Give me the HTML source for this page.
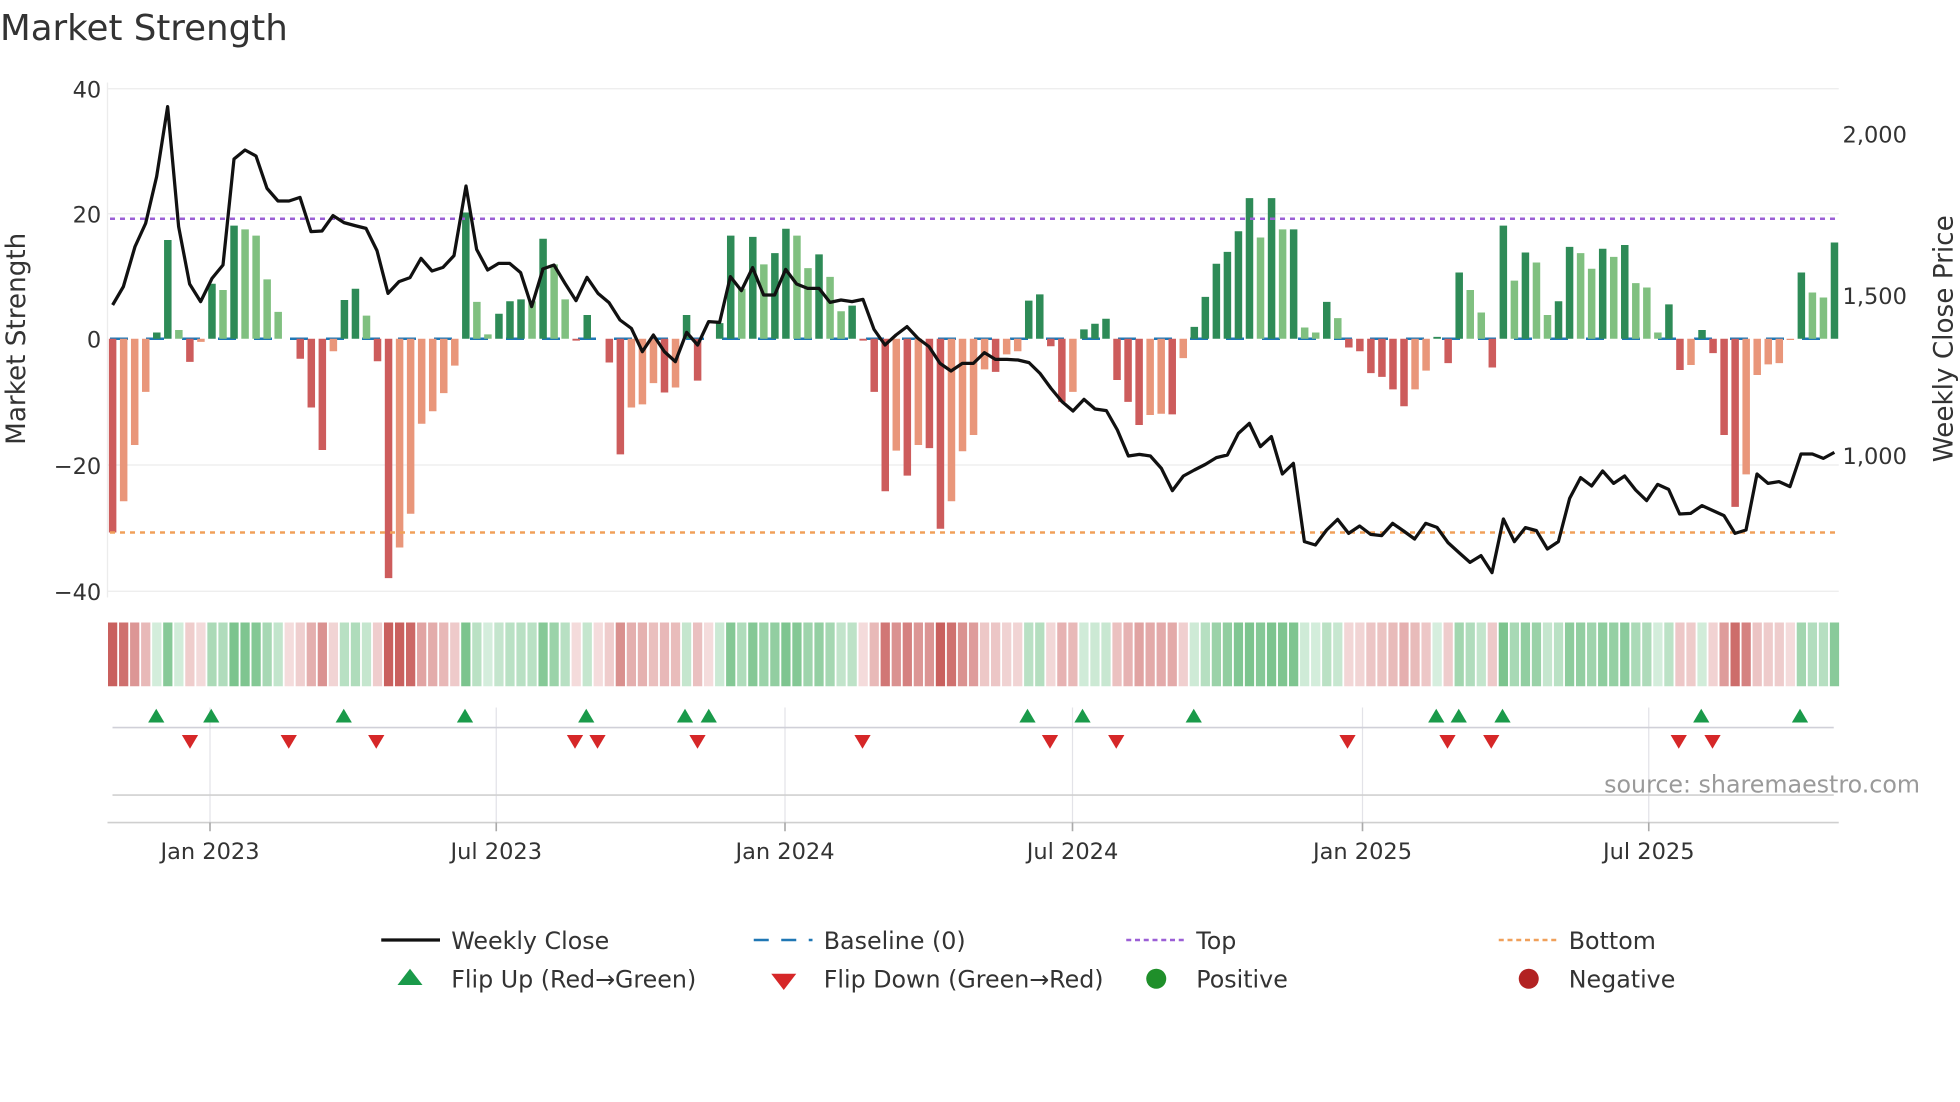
<!DOCTYPE html>
<html><head><meta charset="utf-8">
<style>
html,body{margin:0;padding:0;background:#fff;}
svg{display:block;}
text{font-family:"DejaVu Sans","Liberation Sans",sans-serif;fill:#333;}
</style></head>
<body>
<svg id="c" width="1960" height="1102" viewBox="0 0 1568 881.6" xmlns="http://www.w3.org/2000/svg">
<text x="0" y="32" font-size="28.5" fill="#333">Market Strength</text>
<g stroke="#ececec" stroke-width="1">
<line x1="86" y1="71" x2="1471" y2="71"/>
<line x1="86" y1="171" x2="1471" y2="171"/>
<line x1="86" y1="372" x2="1471" y2="372"/>
<line x1="86" y1="473" x2="1471" y2="473"/>
<line x1="86" y1="66" x2="86" y2="478"/>
</g>
<g font-size="18" text-anchor="end">
<text x="81" y="78">40</text>
<text x="81" y="178">20</text>
<text x="81" y="278">0</text>
<text x="81" y="379">−20</text>
<text x="81" y="480">−40</text>
</g>
<g font-size="18">
<text x="1474" y="114">2,000</text>
<text x="1474" y="243">1,500</text>
<text x="1474" y="371">1,000</text>
</g>
<text font-size="21" transform="translate(20,271) rotate(-90)" text-anchor="middle">Market Strength</text>
<text font-size="21" transform="translate(1562,271) rotate(-90)" text-anchor="middle">Weekly Close Price</text>
<line x1="88" y1="271" x2="1468" y2="271" stroke="#1f77b4" stroke-width="2" stroke-dasharray="14.4 14.4"/>
<g id="bars"></g>
<line x1="88" y1="175" x2="1470" y2="175" stroke="#9b5fd6" stroke-width="2" stroke-dasharray="4 4"/>
<line x1="88" y1="426" x2="1470" y2="426" stroke="#f0a05a" stroke-width="2" stroke-dasharray="4 4"/>
<polyline id="price" fill="none" stroke="#111" stroke-width="2.6" stroke-linejoin="round"/>
<g id="strip"></g>
<g stroke="#e3e3e8" stroke-width="1">
<line x1="168" y1="566" x2="168" y2="660"/><line x1="397" y1="566" x2="397" y2="660"/>
<line x1="628" y1="566" x2="628" y2="660"/><line x1="858" y1="566" x2="858" y2="660"/>
<line x1="1090" y1="566" x2="1090" y2="660"/><line x1="1319" y1="566" x2="1319" y2="660"/>
</g>
<line x1="90" y1="582" x2="1467" y2="582" stroke="#d0d0d8" stroke-width="1.3"/>
<line x1="90" y1="636" x2="1467" y2="636" stroke="#d0d0d0" stroke-width="1.3"/>
<line x1="86" y1="658" x2="1471" y2="658" stroke="#cfcfcf" stroke-width="1.3"/>
<g stroke="#aaa" stroke-width="1.3">
<line x1="168" y1="658" x2="168" y2="665"/><line x1="397" y1="658" x2="397" y2="665"/>
<line x1="628" y1="658" x2="628" y2="665"/><line x1="858" y1="658" x2="858" y2="665"/>
<line x1="1090" y1="658" x2="1090" y2="665"/><line x1="1319" y1="658" x2="1319" y2="665"/>
</g>
<g id="marks"></g>
<text x="1536" y="634" font-size="19" text-anchor="end" style="fill:#9a9a9a">source: sharemaestro.com</text>
<g font-size="18" text-anchor="middle">
<text x="168" y="687">Jan 2023</text><text x="397" y="687">Jul 2023</text>
<text x="628" y="687">Jan 2024</text><text x="858" y="687">Jul 2024</text>
<text x="1090" y="687">Jan 2025</text><text x="1319" y="687">Jul 2025</text>
</g>
<g font-size="19">
<line x1="305" y1="752" x2="352" y2="752" stroke="#111" stroke-width="2.6"/>
<text x="361" y="759">Weekly Close</text>
<line x1="603" y1="752" x2="650" y2="752" stroke="#1f77b4" stroke-width="2" stroke-dasharray="12 10"/>
<text x="659" y="759">Baseline (0)</text>
<line x1="901" y1="752" x2="948" y2="752" stroke="#9b5fd6" stroke-width="2" stroke-dasharray="4 3"/>
<text x="957" y="759">Top</text>
<line x1="1199" y1="752" x2="1246" y2="752" stroke="#f0a05a" stroke-width="2" stroke-dasharray="4 3"/>
<text x="1255" y="759">Bottom</text>
<polygon points="318,788 338,788 328,775" fill="#1a9a4a"/>
<text x="361" y="790">Flip Up (Red→Green)</text>
<polygon points="617,779 637,779 627,792" fill="#d62728"/>
<text x="659" y="790">Flip Down (Green→Red)</text>
<circle cx="925" cy="783" r="8" fill="#1f8f2a"/>
<text x="957" y="790">Positive</text>
<circle cx="1223" cy="783" r="8" fill="#b22222"/>
<text x="1255" y="790">Negative</text>
</g>
</svg>
<script>
(function(){
var NS="http://www.w3.org/2000/svg";
var d="-31D -26L -17L -8.5L 1D 15.8D 1.4L -3.7D -0.5L 8.8D 7.8L 18.1D 17.5L 16.5L 9.5L 4.3L 0L -3.2D -11D -17.8D -2L 6.2D 8D 3.7L -3.6D -38.3D -33.4L -28L -13.6L -11.6L -8.7L -4.3L 20.2D 5.9L 0.7L 4D 6D 6.3D 6L 16D 11.9L 6.3L -0.3D 3.8D 0L -3.8D -18.5D -11L -10.5L -7.1L -8.6D -7.8L 3.8D -6.7D 0L 2.5D 16.5D 8L 16.3D 11.9L 13.7D 17.6D 16.5L 11.3L 13.5D 9.9L 4.4L 5.3D -0.3D -8.5D -24.4D -17.9L -21.9D -17L -17.5D -30.4D -26L -18L -15.4L -4.9L -5.3D -2.5L -2L 6.1D 7.1D -1.2D -10.1D -8.5L 1.5D 2.4D 3.2D -6.6D -10.1D -13.8D -12.2L -12L -12.1D -3.1L 1.9D 6.7D 12D 13.9D 17.2D 22.5D 16.2L 22.5D 17.5L 17.5D 1.8L 1L 5.9D 3.3L -1.4D -2D -5.5D -6.1D -8.1D -10.8D -8.1L -5.1L 0.3D -3.9D 10.6D 7.8L 4.2L -4.6D 18.1D 9.3L 13.8D 12.2L 3.8L 6D 14.7D 13.7L 11.2L 14.4D 13.1L 15D 8.9L 8.2L 1L 5.5D -5D -4.2L 1.4D -2.3D -15.4D -26.9D -21.7L -5.8L -4.1L -3.9L -0.2L 10.6D 7.4L 6.6L 15.4D".split(" ");
var bars=document.getElementById("bars"),strip=document.getElementById("strip");
function mix(a,b,t){var r="#";for(var k=0;k<3;k++){var x=parseInt(a.substr(1+2*k,2),16),y=parseInt(b.substr(1+2*k,2),16);var v=Math.round(x+(y-x)*t).toString(16);if(v.length<2)v="0"+v;r+=v;}return r;}
for(var i=0;i<d.length;i++){
 var s=d[i],t=s.slice(-1),v=parseFloat(s);
 var x=90.1+8.83*i;
 if(Math.abs(v)>0.05){
  var r=document.createElementNS(NS,"rect");
  var h=Math.abs(v)*5;
  r.setAttribute("x",(x-3).toFixed(2));r.setAttribute("width","6");
  r.setAttribute("y",(v>0?271-h:271).toFixed(2));r.setAttribute("height",h.toFixed(2));
  var col=v>0?(t=="D"?"#2e8b57":"#80c080"):(t=="D"?"#cd5c5c":"#e9967a");
  r.setAttribute("fill",col);bars.appendChild(r);
 }
 var c;
 if(v>0){c=mix("#d8efdf","#7cc48e",Math.min(v/18,1));}
 else{c=mix("#f4dcdc","#c9605e",Math.min(-v/30,1));}
 var q=document.createElementNS(NS,"rect");
 q.setAttribute("x",(x-3.7).toFixed(2));q.setAttribute("width","7.4");
 q.setAttribute("y","498");q.setAttribute("height","51");q.setAttribute("fill",c);
 strip.appendChild(q);
}
var segs=[
 [80,[[38,675],[70,620],[105,500],[137,430],[170,290],[203,80],[236,440],[269,612],[302,665],[336,595],[369,555],[402,237],[435,210],[468,228],[501,325],[534,363],[567,363],[600,352],[633,455],[666,453],[699,407],[732,428],[765,437],[798,445],[831,512],[864,640],[897,605],[930,593],[963,535],[996,573],[1029,562],[1062,527],[1098,318],[1130,508],[1163,570],[1196,550],[1229,550],[1262,578],[1295,680],[1329,567]]],
 [432,[[8,567],[42,555],[75,610],[108,662],[141,592],[174,640],[207,668],[240,720],[274,745],[307,815],[340,765],[373,815],[406,845],[440,757],[473,795],[506,725],[539,727],[571,590],[604,632],[638,563],[671,645],[704,645],[737,568],[770,612],[803,625],[837,625],[870,667],[903,660],[936,665],[969,658],[1002,748],[1035,795],[1068,765],[1101,740],[1134,775],[1167,800],[1200,850],[1233,873],[1267,850],[1300,850],[1333,818],[1366,838]]],
 [784,[[48,838],[81,838],[114,840],[147,848],[180,880],[213,925],[246,965],[279,993],[312,958],[345,987],[379,992],[412,1050],[445,1128],[478,1123],[511,1128],[544,1165],[577,1232],[610,1188],[643,1170],[676,1153],[709,1133],[742,1125],[775,1060],[808,1030],[841,1100],[874,1070],[907,1182],[940,1150],[973,1385],[1006,1395],[1040,1350],[1073,1318],[1106,1360],[1139,1338],[1172,1363],[1205,1367],[1238,1330],[1271,1353],[1304,1377],[1337,1330]]],
 [1136,[[18,1330],[51,1342],[84,1388],[117,1418],[150,1447],[183,1427],[216,1478],[250,1317],[283,1385],[316,1343],[349,1352],[382,1407],[415,1385],[449,1255],[482,1193],[515,1218],[548,1173],[581,1210],[614,1188],[647,1230],[680,1262],[713,1213],[746,1228],[779,1302],[812,1300],[846,1277],[879,1292],[912,1307],[945,1360],[978,1350],[1011,1182],[1044,1210],[1077,1205],[1110,1220],[1143,1122],[1177,1122],[1210,1135],[1243,1117]]]
];
var pts=[];
segs.forEach(function(sg){sg[1].forEach(function(p){pts.push((sg[0]+p[0]/3.75).toFixed(1)+","+(64+p[1]/3.75).toFixed(1));});});
document.getElementById("price").setAttribute("points",pts.join(" "));
var marks=document.getElementById("marks");
[125,169,275,372,469,548,567,822,866,955,1149,1167,1202,1361,1440].forEach(function(x){
 var p=document.createElementNS(NS,"polygon");
 p.setAttribute("points",(x-6.5)+",578 "+(x+6.5)+",578 "+x+",567");p.setAttribute("fill","#1a9a4a");marks.appendChild(p);});
[152,231,301,460,478,558,690,840,893,1078,1158,1193,1343,1370].forEach(function(x){
 var p=document.createElementNS(NS,"polygon");
 p.setAttribute("points",(x-6.5)+",588 "+(x+6.5)+",588 "+x+",599");p.setAttribute("fill","#d62728");marks.appendChild(p);});
})();
</script>
</body></html>
